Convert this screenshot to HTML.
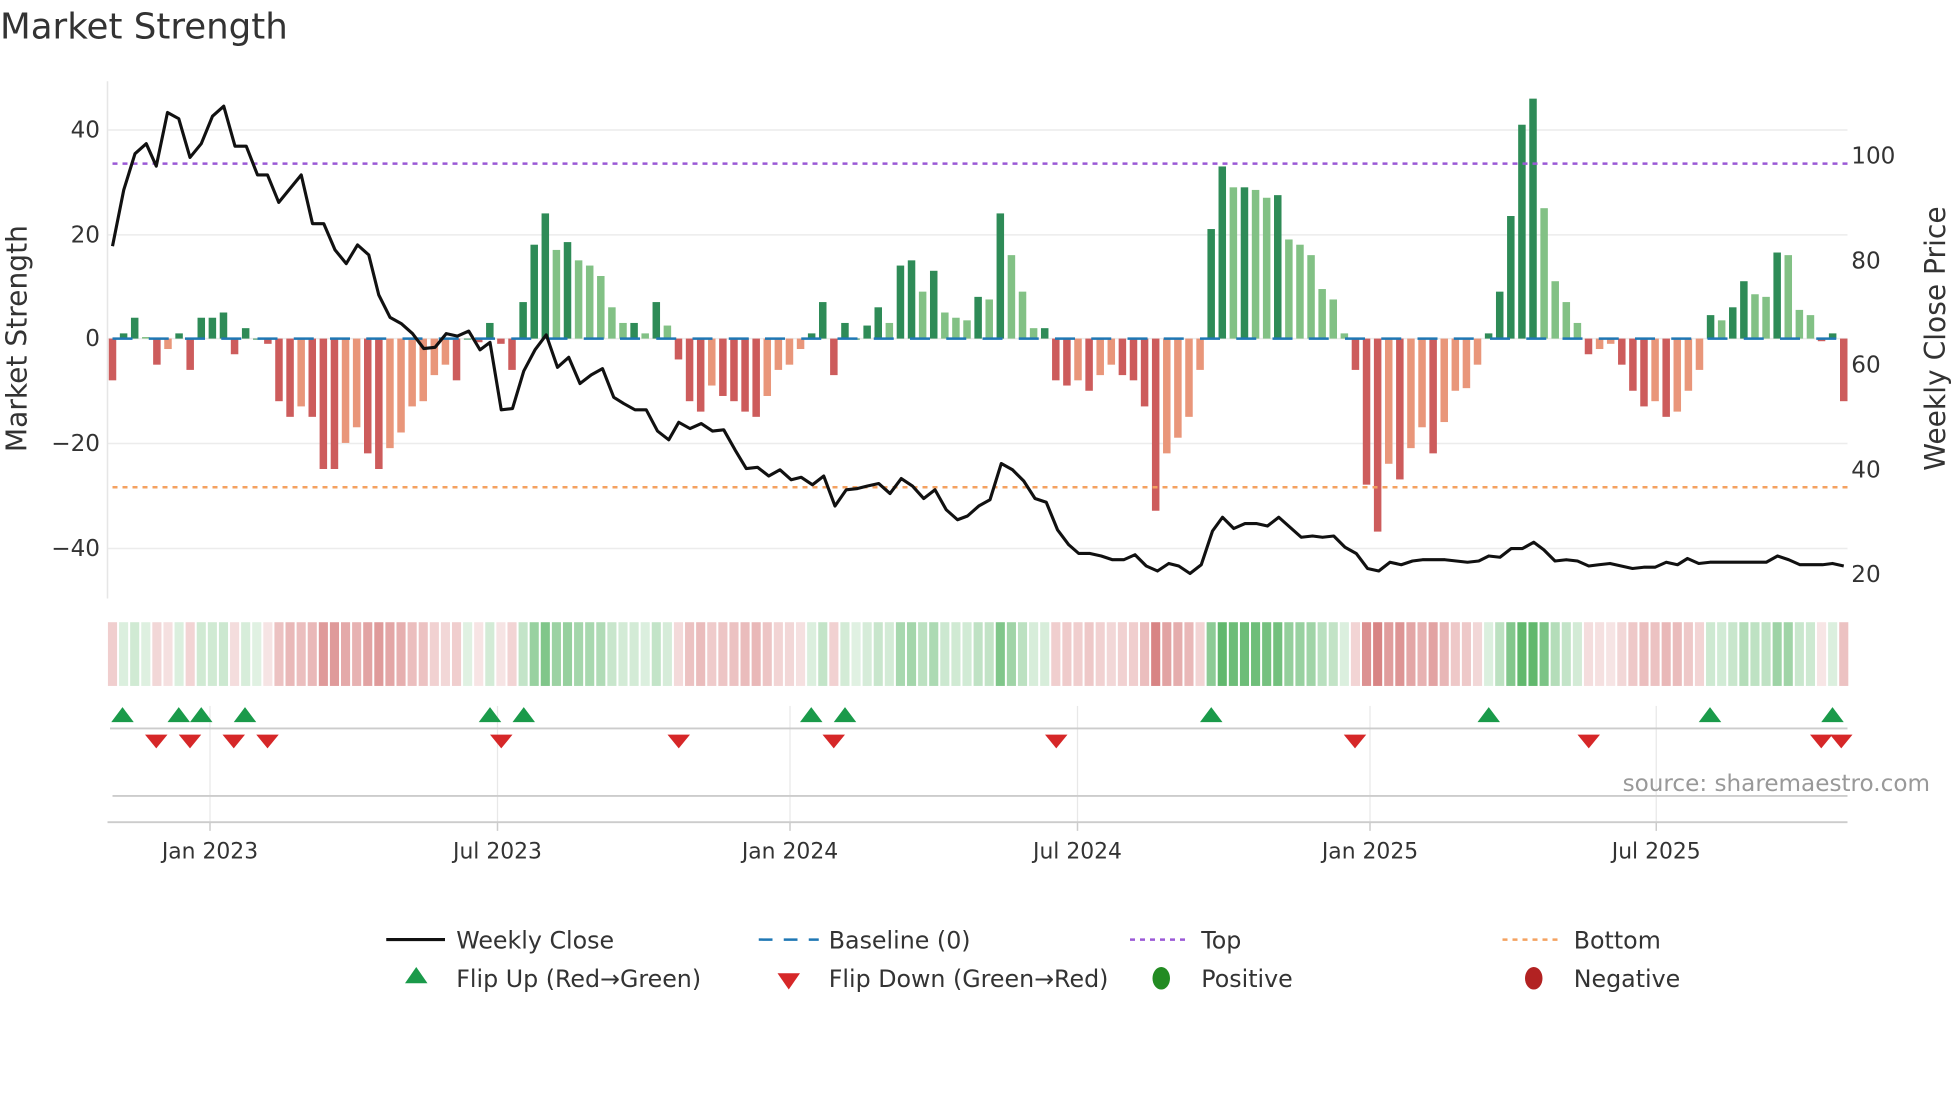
<!DOCTYPE html>
<html><head><meta charset="utf-8"><style>
html,body{margin:0;padding:0;background:#fff;width:1960px;height:1102px;overflow:hidden}
svg{display:block}
text{font-family:"DejaVu Sans","Liberation Sans",sans-serif;fill:#333}
</style></head><body>
<svg id="s" width="1960" height="1102" viewBox="0 0 1568 882" preserveAspectRatio="none" xmlns="http://www.w3.org/2000/svg">
<text x="0" y="31" font-size="28.5">Market Strength</text>
<g stroke="#ececec" stroke-width="1.2">
<line x1="86" x2="1478" y1="104" y2="104"/><line x1="86" x2="1478" y1="188" y2="188"/>
<line x1="86" x2="1478" y1="271" y2="271"/><line x1="86" x2="1478" y1="355" y2="355"/>
<line x1="86" x2="1478" y1="439" y2="439"/>
</g>
<line x1="86" x2="86" y1="65" y2="479" stroke="#e6e6e6" stroke-width="1.2"/>
<g font-size="18.5" text-anchor="end">
<text x="80" y="110">40</text><text x="80" y="194">20</text><text x="80" y="277">0</text>
<text x="80" y="361">−20</text><text x="80" y="445">−40</text>
</g>
<g font-size="18.5">
<text x="1481" y="131">100</text><text x="1481" y="215">80</text><text x="1481" y="298">60</text>
<text x="1481" y="382">40</text><text x="1481" y="466">20</text>
</g>
<text font-size="22.5" transform="translate(21,271) rotate(-90)" text-anchor="middle">Market Strength</text>
<text font-size="22.5" transform="translate(1556,271) rotate(-90)" text-anchor="middle">Weekly Close Price</text>
<g id="bars"></g>
<line x1="90" x2="1478" y1="271" y2="271" stroke="#1f77b4" stroke-width="2" stroke-dasharray="16,13"/>
<line x1="90" x2="1478" y1="131" y2="131" stroke="#9b59d6" stroke-width="2" stroke-dasharray="4,4"/>
<line x1="90" x2="1478" y1="390" y2="390" stroke="#f4a261" stroke-width="2" stroke-dasharray="4,4"/>
<polyline id="price" fill="none" stroke="#111" stroke-width="2.5" stroke-linejoin="round"/>
<g id="heat"></g>
<g stroke="#e8e8e8" stroke-width="1">
<line x1="168" x2="168" y1="565" y2="658"/><line x1="398" x2="398" y1="565" y2="658"/>
<line x1="632" x2="632" y1="565" y2="658"/><line x1="862" x2="862" y1="565" y2="658"/>
<line x1="1096" x2="1096" y1="565" y2="658"/><line x1="1325" x2="1325" y1="565" y2="658"/>
</g>
<line x1="88" x2="1478" y1="583" y2="583" stroke="#ccc" stroke-width="1.5"/>
<line x1="90" x2="1478" y1="637" y2="637" stroke="#ccc" stroke-width="1.5"/>
<line x1="86" x2="1478" y1="658" y2="658" stroke="#ccc" stroke-width="1.5"/>
<g stroke="#ccc" stroke-width="1.2">
<line x1="168" x2="168" y1="658" y2="665"/><line x1="398" x2="398" y1="658" y2="665"/>
<line x1="632" x2="632" y1="658" y2="665"/><line x1="862" x2="862" y1="658" y2="665"/>
<line x1="1096" x2="1096" y1="658" y2="665"/><line x1="1325" x2="1325" y1="658" y2="665"/>
</g>
<g id="flips"></g>
<text x="1544" y="633" font-size="18.5" text-anchor="end" style="fill:#999">source: sharemaestro.com</text>
<g font-size="17.5" text-anchor="middle">
<text x="168" y="687">Jan 2023</text><text x="398" y="687">Jul 2023</text><text x="632" y="687">Jan 2024</text>
<text x="862" y="687">Jul 2024</text><text x="1096" y="687">Jan 2025</text><text x="1325" y="687">Jul 2025</text>
</g>
<g font-size="19">
<line x1="309" x2="356" y1="752" y2="752" stroke="#111" stroke-width="2.5"/>
<text x="365" y="759">Weekly Close</text>
<line x1="607" x2="655" y1="752" y2="752" stroke="#1f77b4" stroke-width="2" stroke-dasharray="11,9"/>
<text x="663" y="759">Baseline (0)</text>
<line x1="904" x2="950" y1="752" y2="752" stroke="#9b59d6" stroke-width="2" stroke-dasharray="4,4"/>
<text x="961" y="759">Top</text>
<line x1="1202" x2="1248" y1="752" y2="752" stroke="#f4a261" stroke-width="2" stroke-dasharray="4,4"/>
<text x="1259" y="759">Bottom</text>
<polygon points="333,774 324,787 342,787" fill="#1a9a4a"/>
<text x="365" y="790">Flip Up (Red→Green)</text>
<polygon points="622,779 640,779 631,792" fill="#d62728"/>
<text x="663" y="790">Flip Down (Green→Red)</text>
<ellipse cx="929" cy="783" rx="7" ry="9" fill="#228b22"/>
<text x="961" y="790">Positive</text>
<ellipse cx="1227" cy="783" rx="7" ry="9" fill="#b22222"/>
<text x="1259" y="790">Negative</text>
</g>
</svg>
<script>
var v=[-8,1,4,0.3,-5,-2,1,-6,4,4,5,-3,2,0,-1,-12,-15,-13,-15,-25,-25,-20,-17,-22,-25,-21,-18,-13,-12,-7,-5,-8,0,-0.7,3,-1,-6,7,18,24,17,18.5,15,14,12,6,3,3,1,7,2.5,-4,-12,-14,-9,-11,-12,-14,-15,-11,-6,-5,-2,1,7,-7,3,0,2.5,6,3,14,15,9,13,5,4,3.5,8,7.5,24,16,9,2,2,-8,-9,-8,-10,-7,-5,-7,-8,-13,-33,-22,-19,-15,-6,21,33,29,29,28.5,27,27.5,19,18,16,9.5,7.5,1,-6,-28,-37,-24,-27,-21,-17,-22,-16,-10,-9.5,-5,1,9,23.5,41,46,25,11,7,3,-3,-2,-1,-5,-10,-13,-12,-15,-14,-10,-6,4.5,3.5,6,11,8.5,8,16.5,16,5.5,4.5,-0.5,1,-12];
var n=v.length,x0=90,dx=(1475-90)/(n-1),ns="http://www.w3.org/2000/svg";
function el(t,a,p){var e=document.createElementNS(ns,t);for(var k in a)e.setAttribute(k,a[k]);p.appendChild(e);}
var B=document.getElementById('bars'),H=document.getElementById('heat');
for(var i=0;i<n;i++){var x=x0+i*dx,val=v[i],prev=i?v[i-1]:0,h=Math.abs(val)*4.175,inc=Math.abs(val)>=Math.abs(prev)||(val*prev<=0);
var c=val>=0?(inc?'#2e8b57':'#82c185'):(inc?'#cd5c5c':'#e9967a');
el('rect',{x:x-3,y:val>=0?271-h:271,width:6,height:Math.max(h,0.8),fill:c},B);
var a=Math.min(1,0.2+Math.abs(val)/40);
var hc=val>=0?'rgba(44,160,60,'+(a*0.75)+')':'rgba(200,80,80,'+(a*0.7)+')';
el('rect',{x:x-dx/2+0.8,y:498,width:dx-1.6,height:51,fill:hc},H);}
var p=[90,197,99,152,108,123,117,115,125,133,134,90,143,95,152,126,161,115,170,93,179,85,188,117,197,117,206,140,214,140,223,162,232,151,241,140,250,179,259,179,268,200,277,211,286,196,295,204,303,236,312,254,321,259,330,267,339,279,348,278,357,267,366,269,375,265,384,280,392,274,401,328,410,327,419,297,428,280,437,268,446,294,455,286,464,307,473,300,482,295,491,318,499,323,508,328,517,328,526,345,535,352,543,338,552,343,561,339,570,345,579,344,588,360,597,375,606,374,615,381,624,376,633,384,641,382,650,388,659,381,668,405,677,392,686,391,694,389,703,387,712,395,721,383,730,389,739,399,748,392,757,408,766,416,774,413,783,405,792,400,801,371,810,376,819,385,828,399,837,402,846,424,855,436,863,443,872,443,881,445,890,448,899,448,908,444,917,453,926,457,935,451,943,453,952,459,961,452,970,425,978,414,987,423,996,419,1005,419,1014,421,1023,414,1032,422,1041,430,1050,429,1058,430,1067,429,1076,438,1085,443,1094,455,1103,457,1112,450,1121,452,1130,449,1138,448,1147,448,1156,448,1165,449,1174,450,1183,449,1191,445,1200,446,1209,439,1218,439,1227,434,1235,440,1244,449,1253,448,1262,449,1271,453,1279,452,1288,451,1297,453,1306,455,1315,454,1324,454,1333,450,1342,452,1350,447,1359,451,1368,450,1377,450,1386,450,1395,450,1404,450,1413,450,1422,445,1431,448,1440,452,1449,452,1458,452,1466,451,1475,453];
var s='';for(i=0;i<p.length;i+=2)s+=p[i]+','+p[i+1]+' ';document.getElementById('price').setAttribute('points',s);
var F=document.getElementById('flips');
[98,143,161,196,392,419,649,676,969,1191,1368,1466].forEach(function(x){el('polygon',{points:x+',566 '+(x-9)+',578 '+(x+9)+',578',fill:'#1a9a4a'},F);});
[125,152,187,214,401,543,667,845,1084,1271,1457,1473].forEach(function(x){el('polygon',{points:(x-9)+',588 '+(x+9)+',588 '+x+',599',fill:'#d62728'},F);});
</script>
</body></html>
